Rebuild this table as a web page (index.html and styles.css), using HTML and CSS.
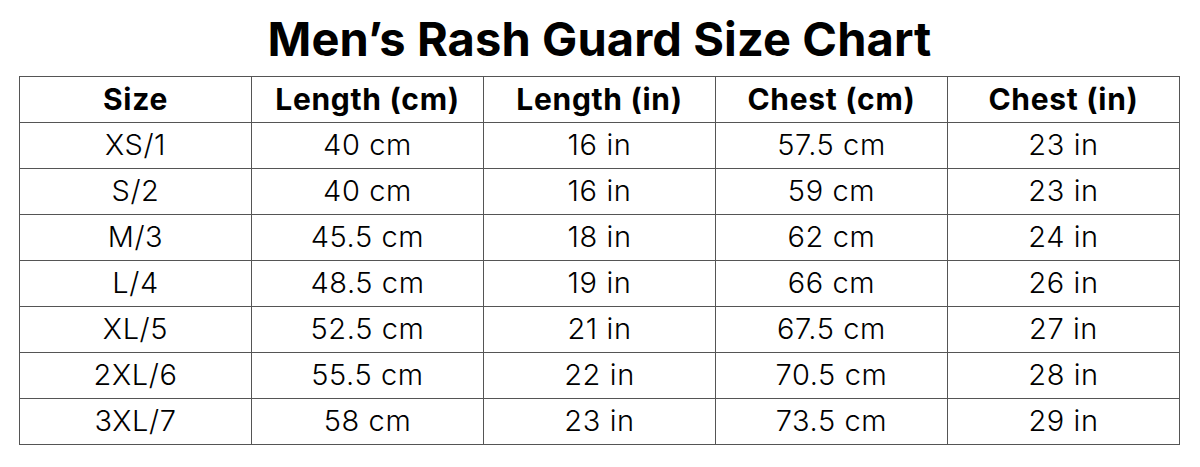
FILE: index.html
```html
<!DOCTYPE html>
<html>
<head>
<meta charset="utf-8">
<link rel="stylesheet" href="styles.css">
</head>
<body>
<div class="page">
  <h1 class="title">Men’s Rash Guard Size Chart</h1>
  <table class="chart">
    <thead>
      <tr><th>Size</th><th>Length (cm)</th><th>Length (in)</th><th>Chest (cm)</th><th>Chest (in)</th></tr>
    </thead>
    <tbody>
      <tr><td>XS/1</td><td>40 cm</td><td>16 in</td><td>57.5 cm</td><td>23 in</td></tr>
      <tr><td>S/2</td><td>40 cm</td><td>16 in</td><td>59 cm</td><td>23 in</td></tr>
      <tr><td>M/3</td><td>45.5 cm</td><td>18 in</td><td>62 cm</td><td>24 in</td></tr>
      <tr><td>L/4</td><td>48.5 cm</td><td>19 in</td><td>66 cm</td><td>26 in</td></tr>
      <tr><td>XL/5</td><td>52.5 cm</td><td>21 in</td><td>67.5 cm</td><td>27 in</td></tr>
      <tr><td>2XL/6</td><td>55.5 cm</td><td>22 in</td><td>70.5 cm</td><td>28 in</td></tr>
      <tr><td>3XL/7</td><td>58 cm</td><td>23 in</td><td>73.5 cm</td><td>29 in</td></tr>
    </tbody>
  </table>
</div>
</body>
</html>
```
FILE: styles.css
```css
html, body {
  margin: 0;
  padding: 0;
  background: #ffffff;
}
.page {
  width: 1200px;
  height: 467px;
  padding: 0 20px 0 19px;
  box-sizing: border-box;
  font-family: Inter, "Open Sans", sans-serif;
  color: #000;
}
.title {
  margin: 0;
  height: 76px;
  line-height: 78px;
  text-align: center;
  font-size: 47px;
  font-weight: 700;
  letter-spacing: 0.1px;
}
.chart {
  width: 1161px;
  border-collapse: collapse;
  table-layout: fixed;
}
.chart th, .chart td {
  border: 1.5px solid #555;
  height: 46px;
  padding: 0 0 3px 0;
  text-align: center;
  vertical-align: middle;
  box-sizing: border-box;
}
.chart th {
  font-size: 30px;
  font-weight: 700;
  letter-spacing: 0.7px;
  padding-bottom: 2px;
}
.chart td {
  font-size: 29px;
  font-weight: 300;
  letter-spacing: 0.6px;
}
```
